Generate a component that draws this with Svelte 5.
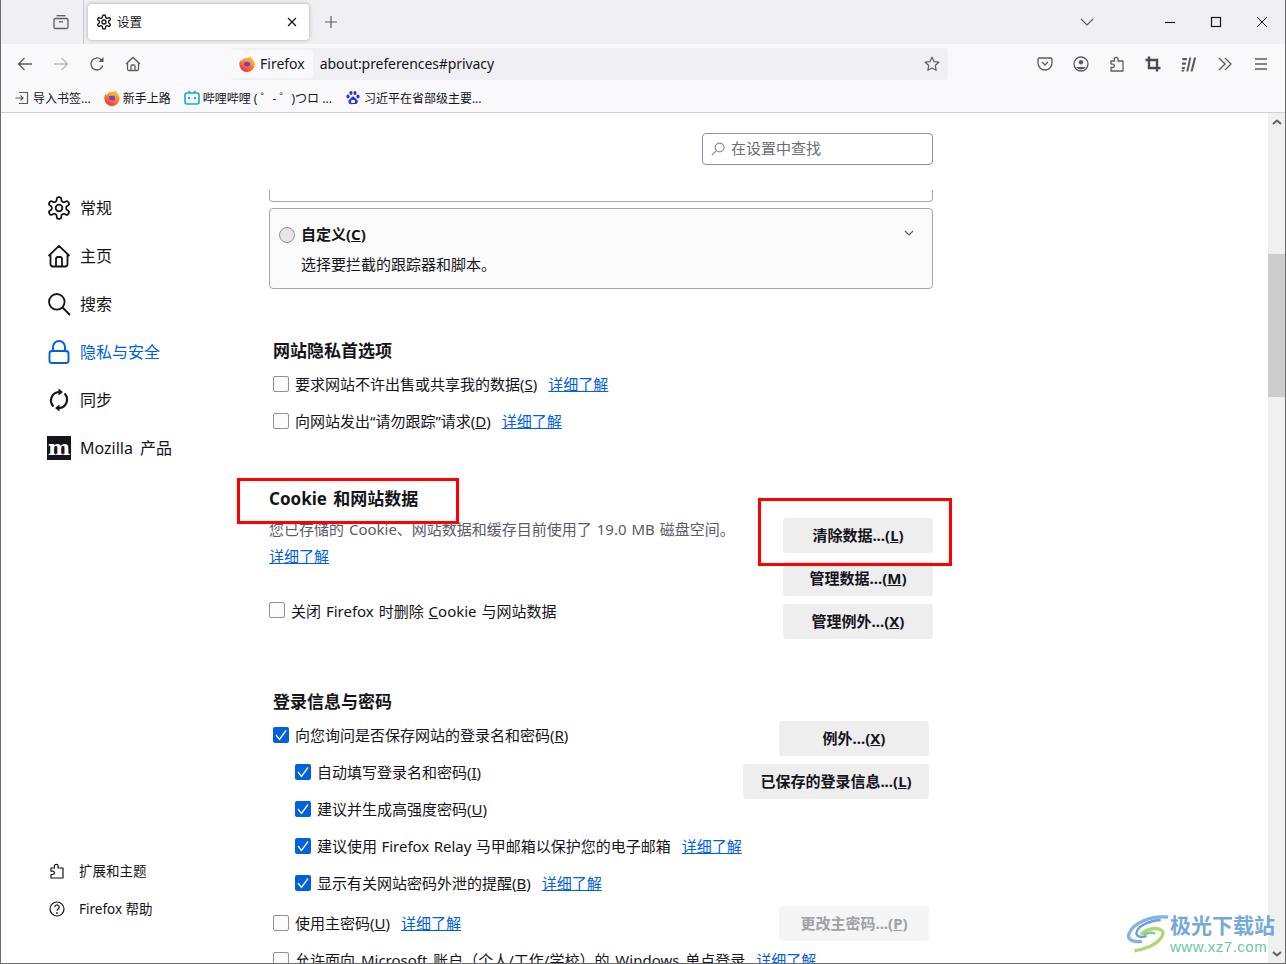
<script lang="ts">
	const bookmarks = [
		{ icon: 'import', label: '导入书签...' },
		{ icon: 'firefox', label: '新手上路' },
		{ icon: 'bili', label: '哔哩哔哩 ( ゜- ゜)つロ ...' },
		{ icon: 'paw', label: '习近平在省部级主要...' }
	];

	const navItems = [
		{ icon: 'gear', label: '常规' },
		{ icon: 'home', label: '主页' },
		{ icon: 'search', label: '搜索' },
		{ icon: 'lock', label: '隐私与安全', active: true },
		{ icon: 'sync', label: '同步' },
		{ icon: 'mozilla', label: 'Mozilla 产品' }
	];

	const GEAR =
		'M12.22 1.5h-.44a2 2 0 0 0-2 2v.68a2 2 0 0 1-1 1.73l-.43.25a2 2 0 0 1-2 0l-.65-.34a2 2 0 0 0-2.73.73l-.22.38a2 2 0 0 0 .73 2.73l.65.36a2 2 0 0 1 1 1.72v.51a2 2 0 0 1-1 1.74l-.65.35a2 2 0 0 0-.73 2.73l.22.38a2 2 0 0 0 2.73.73l.65-.34a2 2 0 0 1 2 0l.43.25a2 2 0 0 1 1 1.73v.68a2 2 0 0 0 2 2h.44a2 2 0 0 0 2-2v-.68a2 2 0 0 1 1-1.73l.43-.25a2 2 0 0 1 2 0l.65.34a2 2 0 0 0 2.73-.73l.22-.39a2 2 0 0 0-.73-2.73l-.65-.34a2 2 0 0 1-1-1.74v-.5a2 2 0 0 1 1-1.74l.65-.35a2 2 0 0 0 .73-2.73l-.22-.38a2 2 0 0 0-2.73-.73l-.65.34a2 2 0 0 1-2 0l-.43-.25a2 2 0 0 1-1-1.73V3.5a2 2 0 0 0-2-2z';
	const PUZZLE =
		'M2 5h3.5l-.2-1.3A2 2 0 0 1 7.3 1.3c1.2 0 2 1 1.8 2.2L9 5h5v10H2v-3.5h1.7a1.7 1.7 0 0 0 0-3.4H2z';
</script>

{#snippet firefox(size)}
	<svg width={size} height={size} viewBox="0 0 16 16">
		<defs>
			<linearGradient id="fx" x1="0.75" y1="0" x2="0.25" y2="1">
				<stop offset="0" stop-color="#ffd23c" />
				<stop offset="0.45" stop-color="#ff8a2a" />
				<stop offset="1" stop-color="#ea2a45" />
			</linearGradient>
		</defs>
		<path d="M11.5 0c.6 1.7 1.2 2.4 2 3.300 1.300 1.500 2.200 3 2.200 4.900a7.700 7.700 0 1 1-15.400 0c0-1.700.5-3.200 1.500-4.500 0 .9.300 1.500.8 1.800.3-1.800 2.100-3.200 4.200-3.400 1.700-.2 3.600-.6 4.700-2.100z" fill="url(#fx)" />
		<circle cx="8" cy="8.300" r="3" fill="#6f3fd8" />
		<path d="M3.800 8c.5 2.500 2.500 4.200 4.700 4 1.800-.2 3.200-1.500 3.500-3.300-.8 1.200-2 1.900-3.500 1.700C6.600 10.200 4.800 9.600 3.800 8z" fill="#ff6a2e" />
		<path d="M5.700 5.200c1.500-1 4-.8 5.300.9-1.300-.7-2.500-.7-3.400-.4z" fill="#ffb030" />
	</svg>
{/snippet}

{#snippet tick()}
	<span class="check on">
		<svg width="16" height="16" viewBox="0 0 16 16" fill="none" stroke="#fff" stroke-width="1.3"><path d="m3 8 3.500 4.500L13 3.500" /></svg>
	</span>
{/snippet}

{#snippet bmIcon(name)}
	{#if name === 'import'}
		<svg width="16" height="16" viewBox="0 0 16 16" fill="none" stroke="#5b5b66" stroke-width="1.2">
			<path d="M5.500 3V2.500h8v11h-8V13" />
			<path d="M1.500 8h7M6.500 5.500 9 8l-2.500 2.500" />
		</svg>
	{:else if name === 'firefox'}
		{@render firefox(16)}
	{:else if name === 'bili'}
		<svg width="16" height="16" viewBox="0 0 16 16" fill="none" stroke="#18a8dc">
			<path d="M4.500 .8 6.500 3M11.500 .8 9.500 3" stroke-width="1.3" />
			<rect x="1" y="3" width="14" height="11" rx="2" stroke-width="1.6" />
			<path d="M5 7v2M11 7v2" stroke-width="1.8" />
		</svg>
	{:else}
		<svg width="16" height="16" viewBox="0 0 16 16" fill="#2932e1">
			<ellipse cx="3" cy="6.500" rx="1.600" ry="2" />
			<ellipse cx="6" cy="3" rx="1.600" ry="2.100" />
			<ellipse cx="10" cy="3" rx="1.600" ry="2.100" />
			<ellipse cx="13" cy="6.500" rx="1.600" ry="2" />
			<path d="M8 6.500c-1.500 0-2 1.500-3 2.500s-2 2-1.500 3.500S5.500 14.500 8 14s3.500 1 4.500-1.500S11.800 10 11 9 9.500 6.500 8 6.500z" />
			<rect x="6" y="10" width="4" height="3" rx="1" fill="#fff" />
		</svg>
	{/if}
{/snippet}

{#snippet navIcon(name)}
	{#if name === 'gear'}
		<svg width="24" height="24" viewBox="0.5 0.5 23 23" fill="none" stroke="#15141a" stroke-width="1.7">
			<path d={GEAR} />
			<circle cx="12" cy="12" r="3.2" />
		</svg>
	{:else if name === 'home'}
		<svg width="24" height="24" viewBox="0 0 24 24" fill="none" stroke="#15141a" stroke-width="1.8" stroke-linejoin="round">
			<path d="M1.500 12 12 1.800 22.500 12M3.500 10.500V20a2.500 2.500 0 0 0 2.500 2.500h12a2.500 2.500 0 0 0 2.500-2.500v-9.500" />
			<path d="M9 22.500V15a2 2 0 0 1 2-2h2a2 2 0 0 1 2 2v7.500" />
		</svg>
	{:else if name === 'search'}
		<svg width="24" height="24" viewBox="0 0 24 24" fill="none" stroke="#15141a" stroke-width="1.8">
			<circle cx="9.800" cy="9.800" r="7.800" />
			<path d="m15.500 15.500 7.500 7.500" />
		</svg>
	{:else if name === 'lock'}
		<svg width="24" height="24" viewBox="0 0 24 24" fill="none" stroke="#0061e0" stroke-width="1.9">
			<rect x="2.500" y="11" width="19" height="12" rx="2.500" />
			<path d="M6 11V7a6 6 0 0 1 12 0v4" />
		</svg>
	{:else if name === 'sync'}
		<svg width="24" height="24" viewBox="0 0 24 24" fill="none" stroke="#15141a" stroke-width="2.2">
			<path d="M6.500 18.500A8.500 8.500 0 0 1 12 4" />
			<path d="M17.500 5.500A8.500 8.500 0 0 1 12 20" />
			<path d="M11.500 .5v7L16 4zM12.500 23.500v-7L8 20z" fill="#15141a" stroke="none" />
		</svg>
	{:else}
		<span class="moz-logo">m</span>
	{/if}
{/snippet}

<div class="window">
	<header class="tabbar">
		<div class="tab-view-btn">
			<svg width="16" height="16" viewBox="0 0 16 16" fill="none" stroke="#5b5b66" stroke-width="1.3">
				<path d="M3.500 1.700h9" />
				<rect x="1" y="4.500" width="14" height="10" rx="1.500" />
				<path d="M6 7.800h4" />
			</svg>
		</div>
		<div class="tab">
			<svg width="16" height="16" viewBox="0 0 24 24" fill="none" stroke="#15141a" stroke-width="2">
				<path d={GEAR} />
				<circle cx="12" cy="12" r="3" />
			</svg>
			<span class="tab-title t">设置</span>
			<svg width="10" height="10" viewBox="0 0 10 10" stroke="#15141a" stroke-width="1.2">
				<path d="m1 1 8 8M9 1 1 9" />
			</svg>
		</div>
		<svg class="new-tab" width="14" height="14" viewBox="0 0 14 14" stroke="#5b5b66" stroke-width="1.2">
			<path d="M7 1v12M1 7h12" />
		</svg>
		<svg class="tab-list" width="14" height="8" viewBox="0 0 14 8" fill="none" stroke="#5b5b66" stroke-width="1.2">
			<path d="m1 1 6 6 6-6" />
		</svg>
		<div class="win-controls">
			<svg width="12" height="12" viewBox="0 0 12 12" stroke="#15141a" stroke-width="1.1"><path d="M1 6.500h10" /></svg>
			<svg width="12" height="12" viewBox="0 0 12 12" fill="none" stroke="#15141a" stroke-width="1.2"><rect x="1.500" y="1.500" width="9" height="9" /></svg>
			<svg width="12" height="12" viewBox="0 0 12 12" stroke="#15141a" stroke-width="1"><path d="m1 1 10 10M11 1 1 11" /></svg>
		</div>
	</header>

	<nav class="navbar">
		<div class="nav-btns">
			<svg width="16" height="16" viewBox="0 0 16 16" fill="none" stroke="#5b5b66" stroke-width="1.3"><path d="M15 8H1.500M7.500 2 1.500 8l6 6" /></svg>
			<svg width="16" height="16" viewBox="0 0 16 16" fill="none" stroke="#b9b9bf" stroke-width="1.3"><path d="M1 8h13.500M8.500 2l6 6-6 6" /></svg>
			<svg width="16" height="16" viewBox="0 0 16 16" fill="none" stroke="#5b5b66" stroke-width="1.3"><path d="M13.800 9.500A6 6 0 1 1 12 3.500l2 2" /><path d="M14.500 1v5h-5" fill="#5b5b66" stroke="none" /></svg>
			<svg width="16" height="16" viewBox="0 0 16 16" fill="none" stroke="#5b5b66" stroke-width="1.3"><path d="M1 8 8 1.500 15 8M2.500 7v6a1.500 1.500 0 0 0 1.500 1.500h8a1.500 1.500 0 0 0 1.500-1.500V7M6 14.500V10a1 1 0 0 1 1-1h2a1 1 0 0 1 1 1v4.500" /></svg>
		</div>
		<div class="urlbar">
			<div class="identity">
				{@render firefox(16)}
				<span class="t">Firefox</span>
			</div>
			<span class="url t">about:preferences#privacy</span>
			<svg class="star" width="16" height="16" viewBox="0 0 16 16" fill="none" stroke="#5b5b66" stroke-width="1.2" stroke-linejoin="round">
				<path d="m8 1.200 2 4.400 4.800.6-3.500 3.300.9 4.800L8 12l-4.200 2.300.9-4.800L1.200 6.200 6 5.600z" />
			</svg>
		</div>
		<div class="toolbar">
			<svg width="16" height="16" viewBox="0 0 16 16" fill="none" stroke="#5b5b66" stroke-width="1.3"><path d="M2.500 2h11A1.500 1.500 0 0 1 15 3.500V7a7 7 0 0 1-14 0V3.500A1.500 1.500 0 0 1 2.500 2z" /><path d="M5 6l3 3 3-3" /></svg>
			<svg width="16" height="16" viewBox="0 0 16 16" fill="none" stroke="#5b5b66" stroke-width="1.3"><circle cx="8" cy="8" r="7" /><circle cx="8" cy="6.300" r="2.200" fill="#5b5b66" stroke="none" /><path d="M3.500 11h9v.5a6 6 0 0 1-9 0z" fill="#5b5b66" stroke="none" /></svg>
			<svg width="16" height="16" viewBox="0 0 16 16" fill="none" stroke="#5b5b66" stroke-width="1.3" stroke-linejoin="round"><path d={PUZZLE} /></svg>
			<svg width="16" height="16" viewBox="0 0 16 16" fill="none" stroke="#4a4a55" stroke-width="2.4"><path d="M4 .5V12h11.500M.5 4H12v11.500" /></svg>
			<svg width="16" height="16" viewBox="0 0 16 16" fill="#5b5b66"><path d="M1.300 2h4.900l-.5 2.300H1.300zM1 6.500h4.200l-.5 2.300H1zM.8 11h3.400l-.6 2.300H.8zM.6 14h2.800l-.4 1.500H.6zM8.300 1.500h2L7.300 15.500h-2zM13 1.500h2.200l-3.600 14H9.500z" /></svg>
			<svg width="16" height="16" viewBox="0 0 16 16" fill="none" stroke="#5b5b66" stroke-width="1.3"><path d="m2 2 6 6-6 6M8 2l6 6-6 6" /></svg>
			<svg width="16" height="16" viewBox="0 0 16 16" stroke="#5b5b66" stroke-width="1.3"><path d="M2 3h12M2 8h12M2 13h12" /></svg>
		</div>
	</nav>

	<div class="bookmarks">
		{#each bookmarks as b}
			<div class="bookmark">
				{@render bmIcon(b.icon)}
				<span>{b.label}</span>
			</div>
		{/each}
	</div>

	<div class="content">
		<aside class="sidebar">
			<ul class="nav-list">
				{#each navItems as item}
					<li class="nav-item" class:active={item.active}>
						{@render navIcon(item.icon)}
						<span class="t">{item.label}</span>
					</li>
				{/each}
			</ul>
			<ul class="foot-list">
				<li class="foot-item">
					<svg width="16" height="16" viewBox="0 0 16 16" fill="none" stroke="#15141a" stroke-width="1.2" stroke-linejoin="round"><path d={PUZZLE} /></svg>
					<span class="t">扩展和主题</span>
				</li>
				<li class="foot-item">
					<svg width="16" height="16" viewBox="0 0 16 16" fill="none" stroke="#15141a" stroke-width="1.2"><circle cx="8" cy="8" r="7" /><path d="M5.800 6.200a2.200 2.200 0 1 1 3.400 1.800c-.8.500-1.200 1-1.200 1.800" /><circle cx="8" cy="12" r=".9" fill="#15141a" stroke="none" /></svg>
					<span class="t">Firefox 帮助</span>
				</li>
			</ul>
		</aside>

		<main class="main">
			<div class="search-wrap">
				<div class="search">
					<svg width="14" height="14" viewBox="0 0 16 16" fill="none" stroke="#8f8f9d" stroke-width="1.4"><circle cx="9.800" cy="6.200" r="5" /><path d="M6 10 1 15" /></svg>
					<span class="search-text">在设置中查找</span>
				</div>
			</div>

			<div class="box-stub"></div>
			<div class="box">
				<div class="box-head">
					<span class="radio"></span>
					<strong>自定义(<u>C</u>)</strong>
					<svg class="box-chevron" width="10" height="6" viewBox="0 0 10 6" fill="none" stroke="#5b5b66" stroke-width="1.2"><path d="m1 1 4 4 4-4" /></svg>
				</div>
				<p class="box-desc">选择要拦截的跟踪器和脚本。</p>
			</div>

			<section class="inset privacy">
				<h2>网站隐私首选项</h2>
				<label class="row"><span class="check"></span><span>要求网站不许出售或共享我的数据(<u>S</u>)</span><a href="#s">详细了解</a></label>
				<label class="row"><span class="check"></span><span>向网站发出“请勿跟踪”请求(<u>D</u>)</span><a href="#d">详细了解</a></label>
			</section>

			<section class="cookies">
				<h1>Cookie 和网站数据</h1>
				<div class="cookie-grid">
					<div class="cookie-info">
						<p class="usage">您已存储的 Cookie、网站数据和缓存目前使用了 19.0 MB 磁盘空间。</p>
						<a class="usage-link" href="#c">详细了解</a>
						<label class="row-plain"><span class="check"></span><span>关闭 Firefox 时删除 <u>C</u>ookie 与网站数据</span></label>
					</div>
					<div class="btn-col">
						<button>清除数据...(<u>L</u>)</button>
						<button>管理数据...(<u>M</u>)</button>
						<button>管理例外...(<u>X</u>)</button>
					</div>
				</div>
			</section>

			<section class="inset logins">
				<h2>登录信息与密码</h2>
				<div class="login-grid">
					<div>
						<label class="row">{@render tick()}<span>向您询问是否保存网站的登录名和密码(<u>R</u>)</span></label>
						<label class="row sub">{@render tick()}<span>自动填写登录名和密码(<u>I</u>)</span></label>
						<label class="row sub">{@render tick()}<span>建议并生成高强度密码(<u>U</u>)</span></label>
						<label class="row sub">{@render tick()}<span>建议使用 Firefox Relay 马甲邮箱以保护您的电子邮箱</span><a href="#r">详细了解</a></label>
						<label class="row sub">{@render tick()}<span>显示有关网站密码外泄的提醒(<u>B</u>)</span><a href="#b">详细了解</a></label>
					</div>
					<div class="btn-col login-btns">
						<button>例外...(<u>X</u>)</button>
						<button class="wide">已保存的登录信息...(<u>L</u>)</button>
					</div>
				</div>
				<div class="master">
					<label class="row"><span class="check"></span><span>使用主密码(<u>U</u>)</span><a href="#u">详细了解</a></label>
					<button disabled>更改主密码...(<u>P</u>)</button>
				</div>
				<label class="row row-sso"><span class="check"></span><span>允许面向 Microsoft 账户（个人/工作/学校）的 Windows 单点登录</span><a href="#w">详细了解</a></label>
			</section>
		</main>

		<div class="scrollbar">
			<svg class="scroll-up" width="10" height="6" viewBox="0 0 10 6" fill="none" stroke="#606060" stroke-width="2"><path d="m1 5 4-3.500L9 5" /></svg>
			<div class="thumb"></div>
			<svg class="scroll-down" width="10" height="6" viewBox="0 0 10 6" fill="none" stroke="#606060" stroke-width="2"><path d="m1 1 4 3.500L9 1" /></svg>
		</div>

		<!-- red annotation frames drawn on top of the screenshot -->
		<div class="mark mark-title"></div>
		<div class="mark mark-btn"></div>

		<div class="watermark">
			<svg width="43" height="40" viewBox="0 0 46 40" fill="none">
				<path d="M44 2C26 0 6 8 2 20c-2 7 6 9 14 8" stroke="#6aa7e0" stroke-width="3.5" />
				<path d="M36 5C22 6 11 12 10 19c0 4 6 5 11 3" stroke="#4f8fd6" stroke-width="2.5" />
				<path d="M15 21c4-6 16-9 22-5 4 3-1 12-12 17-5 2-11 4-17 5" stroke="#9fd35a" stroke-width="3.5" />
				<path d="M18 21c4-3 10-3 12-1" stroke="#5cc28c" stroke-width="2.5" />
			</svg>
			<div class="wm-text">
				<span class="wm-cn">极光下载站</span>
				<span class="wm-url">www.xz7.com</span>
			</div>
		</div>
	</div>
</div>

<style>
	:global(body) {
		margin: 0;
		overflow: hidden;
	}

	.window {
		box-sizing: border-box;
		width: 1286px;
		height: 964px;
		display: flex;
		flex-direction: column;
		overflow: hidden;
		background: #fff;
		color: #15141a;
		border-left: 1px solid #6b6b6b;
		border-right: 1px solid #6b6b6b;
		border-bottom: 1px solid #6b6b6b;
		font-family: "Noto Sans", "Noto Sans CJK SC", sans-serif;
	}

	svg {
		flex-shrink: 0;
		display: block;
	}

	/* Noto's line box sits a pixel low next to the icons */
	.t {
		padding-bottom: 2px;
	}

	/* tab strip */
	.tabbar {
		height: 44px;
		flex-shrink: 0;
		display: flex;
		align-items: center;
		background: #f0f0f4;
	}

	.tab-view-btn {
		width: 83px;
		height: 44px;
		box-sizing: border-box;
		display: flex;
		align-items: center;
		justify-content: flex-end;
		padding-right: 14px;
		border-right: 1px solid #c9c9cc;
	}

	.tab {
		width: 221px;
		height: 36px;
		margin-left: 4px;
		box-sizing: border-box;
		display: flex;
		align-items: center;
		padding: 0 12px 0 8px;
		background: #fff;
		border-radius: 4px;
		box-shadow: 0 0 4px rgba(0, 0, 0, 0.3);
	}

	.tab-title {
		margin-left: 5px;
		flex: 1;
		font-size: 12.5px;
	}

	.new-tab {
		margin-left: 15px;
	}

	.tab-list {
		margin-left: auto;
		margin-right: 70px;
	}

	.win-controls {
		display: flex;
		align-items: center;
		gap: 34px;
		margin-right: 17px;
	}

	/* navigation */
	.navbar {
		height: 38px;
		padding: 4px 0 2px;
		box-sizing: border-box;
		flex-shrink: 0;
		display: flex;
		align-items: center;
		background: #f9f9fb;
	}

	.nav-btns {
		width: 230px;
		display: flex;
		gap: 20px;
		padding-left: 16px;
		box-sizing: border-box;
	}

	.urlbar {
		width: 717px;
		height: 32px;
		display: flex;
		align-items: center;
		background: #f0f0f4;
		border-radius: 4px;
		font-size: 14px;
	}

	.identity {
		height: 28px;
		display: flex;
		align-items: center;
		gap: 5px;
		padding: 0 8px;
		background: #f9f9fb;
		border-radius: 4px;
	}

	.url {
		margin-left: 7px;
		flex: 1;
		letter-spacing: -0.08px;
	}

	.star {
		margin-right: 8px;
	}

	.toolbar {
		display: flex;
		gap: 20px;
		margin-left: 89px;
	}

	/* bookmarks */
	.bookmarks {
		height: 31px;
		flex-shrink: 0;
		box-sizing: border-box;
		display: flex;
		align-items: center;
		gap: 13px;
		padding-left: 13px;
		padding-top: 1px;
		background: #f9f9fb;
		border-bottom: 1px solid #cfcfd2;
		font-size: 12px;
	}

	.bookmark {
		display: flex;
		align-items: center;
		gap: 3px;
	}

	/* page */
	.content {
		position: relative;
		flex: 1;
		min-height: 0;
		display: flex;
	}

	.sidebar {
		width: 268px;
		flex-shrink: 0;
		display: flex;
		flex-direction: column;
		justify-content: space-between;
		padding-top: 71px;
		padding-bottom: 35px;
		box-sizing: border-box;
	}

	ul {
		list-style: none;
		margin: 0;
		padding: 0 0 0 46px;
	}

	.nav-item {
		height: 48px;
		display: flex;
		align-items: center;
		gap: 9px;
		font-size: 16px;
		word-spacing: 3px;
	}

	.nav-item.active {
		color: #0061e0;
	}

	.moz-logo {
		width: 24px;
		height: 24px;
		background: #15141a;
		color: #fff;
		display: flex;
		align-items: center;
		justify-content: center;
		font-family: "DejaVu Serif", serif;
		font-weight: 700;
		font-size: 21px;
		line-height: 1;
		padding-bottom: 2px;
		box-sizing: border-box;
	}

	.foot-item {
		height: 38px;
		display: flex;
		align-items: center;
		gap: 14px;
		padding-left: 2px;
		font-size: 13.5px;
	}

	.main {
		width: 664px;
		flex-shrink: 0;
		height: 900px;
		padding-top: 20px;
		box-sizing: border-box;
		font-size: 15px;
		word-spacing: 1px;
	}

	.search-wrap {
		display: flex;
		justify-content: flex-end;
	}

	.search {
		width: 231px;
		height: 32px;
		box-sizing: border-box;
		display: flex;
		align-items: center;
		gap: 6px;
		padding-left: 8px;
		border: 1px solid #8f8f9d;
		border-radius: 4px;
		color: #6d6d74;
		font-size: 15px;
	}

	.search-text {
		padding-bottom: 4px;
	}

	.box-stub {
		height: 12px;
		margin-top: 25px;
		box-sizing: border-box;
		border: 1px solid #a5a5ab;
		border-top: 0;
		border-radius: 0 0 4px 4px;
	}

	.box {
		margin-top: 6px;
		height: 81px;
		box-sizing: border-box;
		padding: 15px 9px 0;
		background: #fbfbfb;
		border: 1px solid #a5a5ab;
		border-radius: 4px;
	}

	.box-head {
		display: flex;
		align-items: center;
		height: 22px;
	}

	.box-head strong {
		margin-left: 6px;
		padding-bottom: 4px;
	}

	.box-chevron {
		margin-left: auto;
		margin-right: 9px;
		margin-top: -4px;
	}

	.radio {
		width: 16px;
		height: 16px;
		box-sizing: border-box;
		border: 1px solid #8f8f9d;
		border-radius: 50%;
		background: #e6e6e8;
	}

	.box-desc {
		margin: 8px 0 0 22px;
		line-height: 20px;
	}

	.inset {
		padding: 0 4px;
	}

	.privacy {
		margin-top: 50px;
	}

	h2 {
		margin: 0 0 2px;
		font-size: 17px;
		font-weight: 700;
		line-height: 24px;
	}

	.row {
		height: 37px;
		display: flex;
		align-items: center;
		white-space: nowrap;
	}

	.row.sub {
		margin-left: 22px;
		word-spacing: 0.5px;
	}

	.row a {
		margin-left: 11px;
	}

	.row-sso {
		word-spacing: 2px;
	}

	a {
		color: #0060df;
		text-decoration: underline;
	}

	.check {
		width: 16px;
		height: 16px;
		flex-shrink: 0;
		box-sizing: border-box;
		margin-right: 6px;
		border: 1px solid #8f8f9d;
		border-radius: 2px;
		background: #fbfbfb;
	}

	.check.on {
		border: 0;
		background: #0061e0;
	}

	.cookies {
		margin-top: 47px;
	}

	h1 {
		margin: 0;
		font-size: 17px;
		font-weight: 700;
		line-height: 26px;
		word-spacing: 2px;
	}

	.cookie-grid {
		margin-top: 6px;
		display: flex;
		justify-content: space-between;
	}

	.cookie-info {
		display: flex;
		flex-direction: column;
		align-items: flex-start;
	}

	.usage {
		margin: 0;
		line-height: 22px;
		color: #5b5b66;
	}

	.usage-link {
		margin-top: 5px;
		line-height: 22px;
	}

	.row-plain {
		margin-top: 32px;
		height: 22px;
		display: flex;
		align-items: center;
	}

	.btn-col {
		display: flex;
		flex-direction: column;
		align-items: flex-end;
		gap: 8px;
	}

	button {
		width: 150px;
		height: 35px;
		padding: 0 0 3px;
		border: 0;
		border-radius: 4px;
		background: #eeeeef;
		color: #15141a;
		font-family: inherit;
		font-size: 15px;
		font-weight: 700;
		word-spacing: 0;
	}

	button.wide {
		width: 186px;
	}

	button:disabled {
		background: #f5f5f6;
		color: #a0a0a5;
	}

	.logins {
		margin-top: 51px;
	}

	.login-grid {
		display: flex;
		justify-content: space-between;
	}

	.login-btns {
		margin-top: 5px;
	}

	.master {
		margin-top: 3px;
		display: flex;
		justify-content: space-between;
		align-items: flex-start;
	}

	.master button {
		margin-top: 2px;
	}

	.scrollbar {
		position: absolute;
		top: 0;
		right: 0;
		bottom: 0;
		width: 17px;
		background: #f0f0f0;
	}

	.scroll-up {
		position: absolute;
		top: 6px;
		left: 4px;
	}

	.scroll-down {
		position: absolute;
		bottom: 6px;
		left: 4px;
	}

	.thumb {
		position: absolute;
		top: 141px;
		left: 0;
		width: 17px;
		height: 143px;
		background: #cdcdcd;
	}

	.mark {
		position: absolute;
		box-sizing: border-box;
		border: 3px solid #f00;
	}

	.mark-title {
		left: 236px;
		top: 365px;
		width: 222px;
		height: 46px;
	}

	.mark-btn {
		left: 757px;
		top: 385px;
		width: 194px;
		height: 68px;
	}

	.watermark {
		position: absolute;
		left: 1126px;
		top: 800px;
		display: flex;
		align-items: center;
		opacity: 0.85;
	}

	.wm-text {
		display: flex;
		flex-direction: column;
	}

	.wm-cn {
		color: #5b9bd5;
		font-size: 21px;
		font-weight: 700;
		line-height: 24px;
	}

	.wm-url {
		color: #4fc08d;
		font-family: "Liberation Sans", sans-serif;
		font-size: 15px;
		line-height: 17px;
		margin-top: 1px;
		letter-spacing: 0.5px;
	}
</style>
